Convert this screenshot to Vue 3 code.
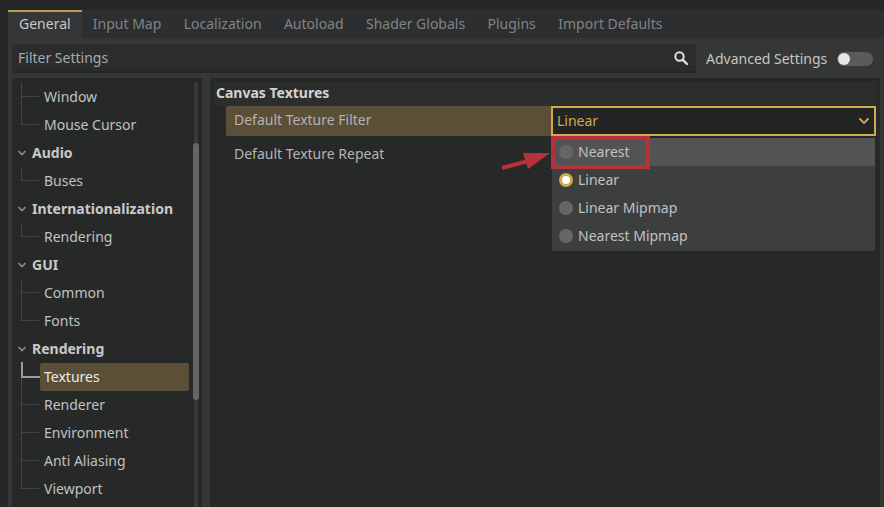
<template>
  <div class="page">
    <div class="window">
      <div class="tabs">
        <div v-for="(tab, i) in tabs" :key="tab" class="tab" :class="{ active: i === 0 }">{{ tab }}</div>
      </div>
      <div class="body">
        <div class="filter-row">
          <div class="filter">
            <span>Filter Settings</span>
            <svg class="search" width="16" height="16" viewBox="0 0 16 16">
              <circle cx="6.5" cy="6.5" r="4.2" fill="none" stroke="#e0e0e0" stroke-width="2" />
              <path d="M9.8 9.8 L14 14" stroke="#e0e0e0" stroke-width="2.4" stroke-linecap="round" />
            </svg>
          </div>
          <span class="advanced">Advanced Settings</span>
          <div class="switch"><i></i></div>
        </div>
        <div class="columns">
          <div class="sidebar">
            <div
              v-for="(item, i) in tree"
              :key="i"
              class="tree-row"
              :class="{ group: item.group, child: !item.group, selected: item.selected, last: item.last }"
            >
              <svg v-if="item.group" class="fold" width="10" height="8" viewBox="0 0 10 8">
                <path d="M1.5 2 L5 5.5 L8.5 2" fill="none" stroke="#8b8d8d" stroke-width="1.6" />
              </svg>
              <span class="tree-label">{{ item.label }}</span>
            </div>
            <div class="scrollbar"><div class="thumb"></div></div>
          </div>
          <div class="content">
            <div class="section">Canvas Textures</div>
            <div class="prop hovered">
              <span class="prop-name">Default Texture Filter</span>
              <div class="select">
                <span class="select-text">Linear</span>
                <svg width="12" height="8" viewBox="0 0 12 8">
                  <path d="M1.5 1.5 L6 6 L10.5 1.5" fill="none" stroke="#d6a94e" stroke-width="1.8" />
                </svg>
              </div>
            </div>
            <div class="prop">
              <span class="prop-name">Default Texture Repeat</span>
            </div>
          </div>
        </div>
      </div>
    </div>

    <div class="popup">
      <div
        v-for="opt in options"
        :key="opt.label"
        class="option"
        :class="{ hover: opt.hover }"
      >
        <span class="radio" :class="{ on: opt.on }"></span>
        <span class="opt-text">{{ opt.label }}</span>
      </div>
    </div>
    <div class="red-box"></div>
    <svg class="red-arrow" width="56" height="38" viewBox="0 0 56 38">
      <path d="M2 30 L28 23" stroke="#b5323d" stroke-width="4" fill="none" />
      <path d="M50 15 L23 15 L28 31 Z" fill="#b5323d" />
    </svg>
  </div>
</template>

<script setup>
const tabs = ['General', 'Input Map', 'Localization', 'Autoload', 'Shader Globals', 'Plugins', 'Import Defaults']

const tree = [
  { label: 'Window' },
  { label: 'Mouse Cursor', last: true },
  { label: 'Audio', group: true },
  { label: 'Buses', last: true },
  { label: 'Internationalization', group: true },
  { label: 'Rendering', last: true },
  { label: 'GUI', group: true },
  { label: 'Common' },
  { label: 'Fonts', last: true },
  { label: 'Rendering', group: true },
  { label: 'Textures', selected: true },
  { label: 'Renderer' },
  { label: 'Environment' },
  { label: 'Anti Aliasing' },
  { label: 'Viewport', last: true }
]

const options = [
  { label: 'Nearest', hover: true },
  { label: 'Linear', on: true },
  { label: 'Linear Mipmap' },
  { label: 'Nearest Mipmap' }
]
</script>

<style>
html, body {
  margin: 0;
  background: #252728;
}
</style>

<style scoped>
.page {
  position: relative;
  width: 884px;
  height: 507px;
  overflow: hidden;
  background: #252728;
  font-family: "Noto Sans", sans-serif;
  font-size: 14px;
  color: #c0c1c1;
  padding: 10px 0 0 8px;
  box-sizing: border-box;
}

.window {
  height: 540px;
  background: #353737;
}

.tabs {
  display: flex;
  height: 28px;
  background: #2c2e2f;
}

.tab {
  padding: 2px 11.2px 0;
  line-height: 24px;
  color: #828484;
}

.tab.active {
  border-top: 2px solid #b99a55;
  padding: 0 11px;
  background: #353737;
  color: #c6c7c7;
}

.body {
  padding: 6px 4px 0;
}

.filter-row {
  display: flex;
  align-items: center;
  height: 29px;
}

.filter {
  width: 684px;
  height: 29px;
  box-sizing: border-box;
  display: flex;
  align-items: center;
  justify-content: space-between;
  padding: 0 7px 0 6px;
  background: #2a2c2d;
  border-bottom: 2px solid #242627;
  color: #a9abab;
}

.search {
  display: block;
}

.advanced {
  margin-left: 10px;
  color: #c4c5c5;
}

.switch {
  width: 36px;
  height: 14px;
  margin-left: 10px;
  border-radius: 7px;
  background: #5a5c5c;
  position: relative;
}

.switch i {
  position: absolute;
  left: 1px;
  top: 1px;
  width: 12px;
  height: 12px;
  border-radius: 50%;
  background: #e6e6e6;
}

.columns {
  display: flex;
  gap: 8px;
  margin-top: 5px;
}

.sidebar {
  position: relative;
  width: 190px;
  height: 440px;
  padding-top: 5px;
  box-sizing: border-box;
  background: #272929;
  flex: none;
}

.tree-row {
  position: relative;
  height: 28px;
  line-height: 28px;
  box-sizing: border-box;
}

.tree-row.group {
  padding-left: 20px;
  font-weight: 700;
  color: #c8c9c9;
}

.fold {
  position: absolute;
  left: 5px;
  top: 10px;
}

.tree-row.child {
  margin-left: 28px;
  margin-right: 13px;
  padding-left: 4px;
  border-radius: 2px;
}

/* connector lines of the tree, drawn left of each row */
.tree-row.child::before {
  content: "";
  position: absolute;
  left: -19px;
  top: 0;
  width: 1px;
  height: 28px;
  background: #434545;
}

.tree-row.child.last::before {
  height: 14px;
}

.tree-row.child::after {
  content: "";
  position: absolute;
  left: -19px;
  top: 13px;
  width: 18px;
  height: 1px;
  background: #434545;
}

.tree-row:first-child.child::before {
  top: -1px;
  height: 29px;
}

.tree-row.selected {
  background: #5b4f38;
  color: #ebebeb;
}

.tree-row.selected::before {
  top: -1px;
  width: 2px;
  height: 29px;
  background:
    linear-gradient(#9a9c9c 16px, transparent 16px) 0 0 / 2px 100% no-repeat,
    linear-gradient(#434545, #434545) 0 0 / 1px 100% no-repeat;
}

.tree-row.selected::after {
  height: 2px;
  width: 19px;
  top: 13px;
  background: #9a9c9c;
}

.tree-label {
  position: relative;
}

.scrollbar {
  position: absolute;
  left: 182px;
  top: 4px;
  width: 4px;
  height: 430px;
  background: #383a3a;
  border-radius: 2px;
}

.thumb {
  position: absolute;
  top: 61px;
  left: -1px;
  width: 6px;
  height: 257px;
  border-radius: 3px;
  background: #656767;
}

.content {
  flex: 1;
  height: 440px;
  background: #272929;
  padding: 4px 4px 0;
  box-sizing: border-box;
}

.section {
  height: 24px;
  line-height: 22px;
  padding-left: 2px;
  font-weight: 700;
  color: #d2d3d3;
  background: #2c2e2e;
}

.prop {
  display: flex;
  margin-left: 12px;
  height: 30px;
  margin-bottom: 4px;
}

.prop.hovered {
  background: #5b4f38;
  border-radius: 2px 0 0 2px;
}

.prop-name {
  width: 325px;
  padding-left: 8px;
  box-sizing: border-box;
  line-height: 28px;
  color: #b2b3b3;
}

.select {
  flex: 1;
  box-sizing: border-box;
  display: flex;
  align-items: center;
  justify-content: space-between;
  padding: 0 4px 0 4px;
  background: #232525;
  border: 2px solid #d0a850;
  color: #d0a850;
}

.select-text {
  line-height: 18px;
  margin-top: -1px;
}

.popup {
  position: absolute;
  left: 552px;
  top: 138px;
  width: 323px;
  height: 113px;
  background: #3d3f3f;
}

.option {
  height: 28px;
  display: flex;
  align-items: center;
  gap: 5px;
  padding-left: 7px;
}

.option.hover {
  background: #525454;
}

.opt-text {
  line-height: 18px;
  margin-top: -1px;
}

.radio {
  width: 14px;
  height: 14px;
  box-sizing: border-box;
  border-radius: 50%;
  background: #656767;
}

.radio.on {
  background: #fff;
  border: 3px solid #d0a850;
}

.red-box {
  position: absolute;
  left: 551px;
  top: 136px;
  width: 99px;
  height: 33px;
  box-sizing: border-box;
  border: 4px solid #b5323d;
}

.red-arrow {
  position: absolute;
  left: 500px;
  top: 138px;
}
</style>
